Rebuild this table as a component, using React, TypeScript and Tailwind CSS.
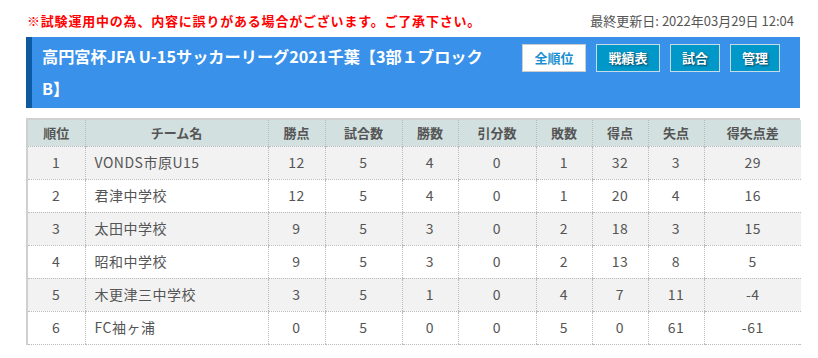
import React from "react";

const rows = [
  ["1", "VONDS市原U15", "12", "5", "4", "0", "1", "32", "3", "29"],
  ["2", "君津中学校", "12", "5", "4", "0", "1", "20", "4", "16"],
  ["3", "太田中学校", "9", "5", "3", "0", "2", "18", "3", "15"],
  ["4", "昭和中学校", "9", "5", "3", "0", "2", "13", "8", "5"],
  ["5", "木更津三中学校", "3", "5", "1", "0", "4", "7", "11", "-4"],
  ["6", "FC袖ヶ浦", "0", "5", "0", "0", "5", "0", "61", "-61"],
];
const heads = ["順位", "チーム名", "勝点", "試合数", "勝数", "引分数", "敗数", "得点", "失点", "得失点差"];
const widths = [57, 183, 57, 77, 56, 78, 56, 56, 56, 97];

const font = { fontFamily: '"Noto Sans CJK JP", "Noto Sans", sans-serif' };

export default function App() {
  return (
    <div className="w-[818px] h-[358px] bg-white text-[#555]" style={font}>
      <div className="flex items-center justify-between pl-[27px] pr-[24px] pt-[11px] h-[37px] pb-[6px]">
        <span className="text-[13px] font-bold text-[#ff0000] tracking-[0.8px]">
          ※試験運用中の為、内容に誤りがある場合がございます。ご了承下さい。
        </span>
        <span className="text-[13px] text-[#555]">最終更新日: 2022年03月29日 12:04</span>
      </div>
      <div className="ml-[26px] w-[774px] h-[71px] bg-[#3991ea] border-l-[6px] border-[#0d5aa0] flex items-start pl-[10px] pr-[20px]">
        <div className="w-[455px] text-white font-bold text-[16.2px] leading-[32px] pt-[3px]">
          高円宮杯JFA U-15サッカーリーグ2021千葉【3部１ブロックB】
        </div>
        <div className="ml-auto mt-[7px] flex gap-[10px]">
          <div className="w-[64px] h-[28px] bg-white border border-[#ccc] text-[#1a8fd0] font-bold text-[13px] flex items-center justify-center">全順位</div>
          <div className="w-[64px] h-[28px] bg-[#0097c9] border border-[#c8dbe8] text-white font-bold text-[13px] flex items-center justify-center [text-shadow:1px_1px_2px_rgba(0,0,0,0.6)]">戦績表</div>
          <div className="w-[50px] h-[28px] bg-[#0097c9] border border-[#c8dbe8] text-white font-bold text-[13px] flex items-center justify-center [text-shadow:1px_1px_2px_rgba(0,0,0,0.6)]">試合</div>
          <div className="w-[50px] h-[28px] bg-[#0097c9] border border-[#c8dbe8] text-white font-bold text-[13px] flex items-center justify-center [text-shadow:1px_1px_2px_rgba(0,0,0,0.6)]">管理</div>
        </div>
      </div>
      <div className="ml-[26px] mt-[10px] w-[774px] border-l-2 border-r-2 border-t-2 border-[#d0d0d0]">
        <table className="w-full border-collapse text-[14px] table-fixed">
          <colgroup>
            {widths.map((w, i) => (
              <col key={i} style={{ width: w }} />
            ))}
          </colgroup>
          <thead>
            <tr className="bg-[#d3e0e0] h-[26px]">
              {heads.map((h, i) => (
                <th key={i} className={`font-bold text-[13px] text-[#555] text-center p-0 border-dotted border-[#bbb] ${i > 0 ? "border-l" : ""}`}>
                  {h}
                </th>
              ))}
            </tr>
          </thead>
          <tbody>
            {rows.map((r, ri) => (
              <tr key={ri} className={`h-[33px] ${ri % 2 === 0 ? "bg-[#f2f2f2]" : "bg-white"}`}>
                {r.map((c, ci) => (
                  <td
                    key={ci}
                    className={`p-0 tracking-[0.5px] border-t border-b border-dotted border-[#bbb] ${ci > 0 ? "border-l" : ""} ${ci === 1 ? "text-left pl-[9px]" : "text-center"}`}
                  >
                    {c}
                  </td>
                ))}
              </tr>
            ))}
          </tbody>
        </table>
      </div>
    </div>
  );
}
